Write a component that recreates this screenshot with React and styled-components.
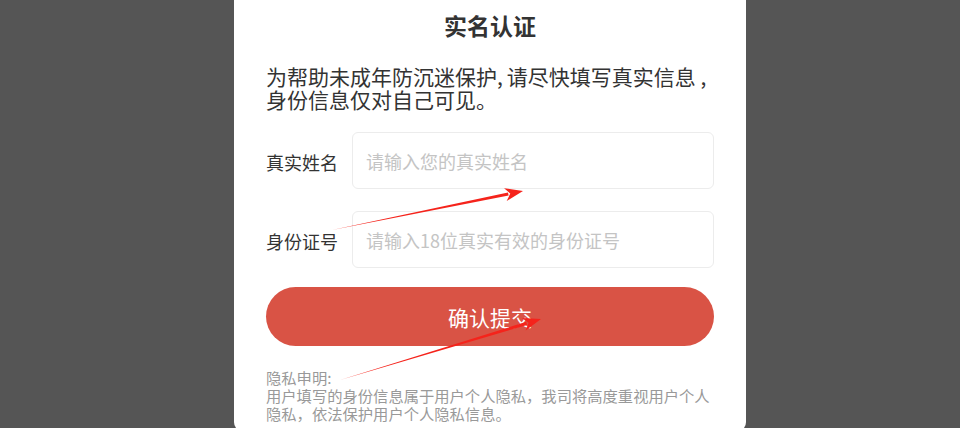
import React from "react";
import styled, { createGlobalStyle } from "styled-components";

const Global = createGlobalStyle`
  html, body { margin: 0; padding: 0; }
  body {
    background: #555555;
    font-family: "Noto Sans CJK SC", "Noto Sans", sans-serif;
    overflow: hidden;
  }
`;

const Page = styled.div`
  position: relative;
  width: 960px;
  height: 428px;
  overflow: hidden;
  background: #555555;
`;

const Modal = styled.div`
  box-sizing: border-box;
  width: 512px;
  margin-left: 234px;
  background: #ffffff;
  border-radius: 0 0 10px 10px;
  padding: 9px 32px 10px 32px;
  display: flex;
  flex-direction: column;
`;

const Title = styled.h2`
  margin: 0;
  font-size: 23px;
  line-height: 32px;
  font-weight: 700;
  color: #333333;
  text-align: center;
`;

const Intro = styled.p`
  margin: 24px 0 0 0;
  font-size: 21px;
  line-height: 23px;
  color: #333333;
  white-space: nowrap;
`;

const Comma = styled.span`
  margin-right: ${(p) => p.$gap}px;
`;

const Form = styled.div`
  margin-top: 21px;
  display: flex;
  flex-direction: column;
  gap: 22px;
`;

const Row = styled.div`
  display: flex;
  align-items: center;
  gap: 14px;
`;

const Label = styled.label`
  width: 72px;
  flex: none;
  font-size: 18px;
  color: #333333;
  white-space: nowrap;
  position: relative;
  top: ${(p) => p.$shift || 0}px;
`;

const Input = styled.input`
  box-sizing: border-box;
  flex: 1;
  height: 57px;
  border: 1px solid #ececec;
  border-radius: 6px;
  padding: 0 13px;
  font-family: inherit;
  font-size: 18px;
  color: #333;
  outline: none;
  &::placeholder { color: #c4c4c4; }
`;

const Submit = styled.button`
  margin-top: 19px;
  height: 59px;
  border: none;
  border-radius: 30px;
  background: #d95345;
  color: #ffffff;
  font-family: inherit;
  font-size: 21px;
  cursor: pointer;
`;

const Privacy = styled.div`
  margin-top: 22px;
  font-size: 15.3px;
  line-height: 18px;
  color: #999999;
  white-space: nowrap;
`;

const Overlay = styled.svg`
  position: absolute;
  left: 0;
  top: 0;
  pointer-events: none;
`;

function Arrow({ x1, y1, x2, y2 }) {
  const dx = x2 - x1;
  const dy = y2 - y1;
  const len = Math.hypot(dx, dy);
  const ux = dx / len;
  const uy = dy / len;
  const nx = -uy;
  const ny = ux;
  const headLen = 15;
  const headW = 6.5;
  const bx = x2 - ux * headLen;
  const by = y2 - uy * headLen;
  const shaftW = 1.6;
  const shaft = [
    [x1, y1],
    [bx + nx * shaftW, by + ny * shaftW],
    [bx - nx * shaftW, by - ny * shaftW],
  ];
  const head = [
    [x2, y2],
    [bx + nx * headW - ux * 3, by + ny * headW - uy * 3],
    [bx + ux * 2, by + uy * 2],
    [bx - nx * headW - ux * 3, by - ny * headW - uy * 3],
  ];
  const pts = (a) => a.map((p) => p.join(",")).join(" ");
  return (
    <g fill="#f5231b">
      <polygon points={pts(shaft)} />
      <polygon points={pts(head)} />
    </g>
  );
}

export default function App() {
  return (
    <Page>
      <Global />
      <Modal>
        <Title>实名认证</Title>
        <Intro>
          为帮助未成年防沉迷保护<Comma $gap={4}>,</Comma>请尽快填写真实信息<Comma $gap={0}> ,</Comma>
          <br />
          身份信息仅对自己可见。
        </Intro>
        <Form>
          <Row>
            <Label $shift={1}>真实姓名</Label>
            <Input placeholder="请输入您的真实姓名" />
          </Row>
          <Row>
            <Label $shift={1}>身份证号</Label>
            <Input placeholder="请输入18位真实有效的身份证号" />
          </Row>
        </Form>
        <Submit>确认提交</Submit>
        <Privacy>
          隐私申明:
          <br />
          用户填写的身份信息属于用户个人隐私，我司将高度重视用户个人
          <br />
          隐私，依法保护用户个人隐私信息。
        </Privacy>
      </Modal>
      <Overlay width="960" height="428" viewBox="0 0 960 428">
        <Arrow x1={332} y1={230} x2={523} y2={191} />
        <Arrow x1={340} y1={380} x2={541} y2={319} />
      </Overlay>
    </Page>
  );
}
